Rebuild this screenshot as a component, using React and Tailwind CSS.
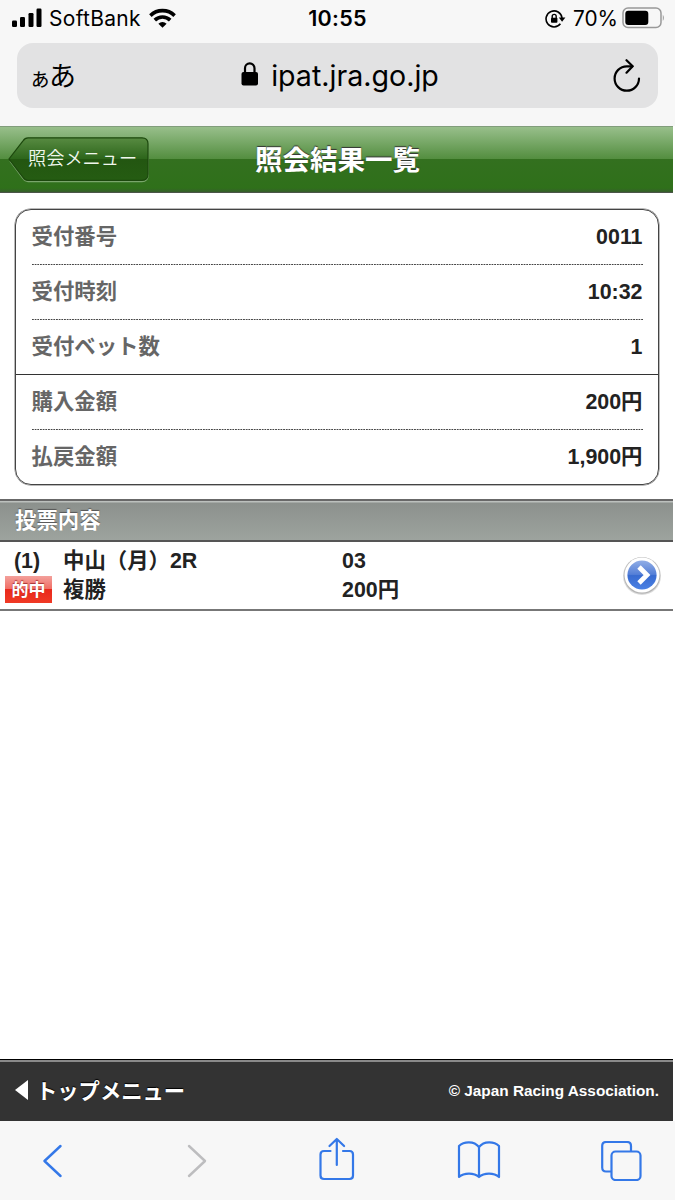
const blue = '#3478e8';

const dots = 'bg-[linear-gradient(90deg,#444_1.4px,transparent_1.4px)] bg-[length:2.68px_1px] bg-repeat-x';

const summary = [
  { label: '受付番号', value: '0011', line: dots },
  { label: '受付時刻', value: '10:32', line: dots },
  { label: '受付ベット数', value: '1', line: 'bg-transparent' },
];

const amounts = [
  { label: '購入金額', value: '200円', line: dots },
  { label: '払戻金額', value: '1,900円', line: 'bg-transparent' },
];

function StatusBar() {
  return (
    <div className="grid h-[43px] grid-cols-3 pb-[6px] text-[21.5px] font-['Inter',sans-serif] text-black">
      <div className="flex items-center pl-3">
        <svg className="-mt-[2px]" width="30" height="20" viewBox="0 0 30 20">
          <rect x="0" y="12.5" width="5" height="6.5" rx="1.2" />
          <rect x="8" y="9" width="5" height="10" rx="1.2" />
          <rect x="16.5" y="5" width="5" height="14" rx="1.2" />
          <rect x="24.5" y="0.5" width="5" height="18.5" rx="1.2" />
        </svg>
        <span className="ml-[7px] w-[92px] whitespace-nowrap text-[21px] tracking-[0.3px]">SoftBank</span>
        <svg className="ml-2 -mt-[2px]" width="27" height="20" viewBox="0 0 27 20">
          <g fill="none" stroke="#000" strokeWidth="3.6">
            <path d="M1.4 7.6a17.3 17.3 0 0 1 24.2 0" />
            <path d="M5.8 12.1a11 11 0 0 1 15.4 0" />
          </g>
          <path d="M9.4 15.7a5.9 5.9 0 0 1 8.2 0l-4.1 4z" />
        </svg>
      </div>
      <div className="flex items-center justify-center font-semibold tracking-[0.3px]">10:55</div>
      <div className="flex items-center justify-end pr-[10px]">
        <svg className="-ml-px mr-px" width="21" height="20" viewBox="0 0 21 20">
          <path d="M15.4 14.8A8 8 0 1 1 17 9" fill="none" stroke="#000" strokeWidth="1.6" />
          <path d="M13.8 8.6h6.6l-3.3 4.2z" />
          <rect x="6" y="8.8" width="6.4" height="5" rx="0.8" />
          <path d="M7.2 9V7.4a2 2 0 0 1 4 0V9" fill="none" stroke="#000" strokeWidth="1.4" />
        </svg>
        <span className="ml-[6px] w-[45px] whitespace-nowrap text-[20.8px]">70%</span>
        <svg className="ml-1 -mt-[2px]" width="43" height="22" viewBox="0 0 43 22">
          <rect x="1" y="1" width="38" height="19.5" rx="5" fill="none" stroke="#999" strokeWidth="1.5" />
          <rect x="3.3" y="3.7" width="23" height="14.2" rx="3" />
          <path d="M40.8 7.5q2.2 3.3 0 6.6z" fill="#999" />
        </svg>
      </div>
    </div>
  );
}

function AddressBar() {
  return (
    <div className="mx-[17px] grid h-[65px] grid-cols-[1fr_auto_1fr] items-center rounded-[16px] bg-[#e2e2e3] text-black">
      <div className="flex items-baseline pb-[2px] pl-[12px] font-['Noto_Sans_CJK_JP',sans-serif] leading-none">
        <span className="text-[22px] tracking-[-2px]">ぁ</span>
        <span className="text-[27px]">あ</span>
      </div>
      <div className="flex items-center pl-[5px]">
        <svg className="-mt-[2px]" width="18" height="24" viewBox="0 0 18 24">
          <rect x="0.5" y="10" width="16.5" height="13.5" rx="2" />
          <path d="M4 11V6.2a4.75 4.75 0 0 1 9.5 0V11" fill="none" stroke="#000" strokeWidth="2.2" />
        </svg>
        <span className="mt-[2px] ml-[12px] whitespace-nowrap font-['Inter',sans-serif] text-[28.6px]">ipat.jra.go.jp</span>
      </div>
      <div className="flex justify-end pr-[17px]">
        <svg width="28" height="34" viewBox="0 0 28 34" fill="none" stroke="#000" strokeWidth="2.2" strokeLinecap="round" strokeLinejoin="round">
          <path d="M26 19.5A12.2 12.2 0 1 1 13.8 7.3h5.5" />
          <path d="M13.5 1.2l6.2 6.1-6.2 6.4" />
        </svg>
      </div>
    </div>
  );
}

function PageHeader() {
  return (
    <header className="grid h-[67px] w-[673px] grid-cols-[1fr_auto_1fr] items-center border-t border-b border-t-[#819d7b] border-b-[#4b5548] bg-[linear-gradient(#98bf8b_0%,#528d3e_50%,#33701f_50%,#2f701a_94%,#365e2b_100%)]">
      <div className="relative ml-2 h-[46px] w-[142px]">
        <svg className="absolute inset-0" width="142" height="46" viewBox="0 0 142 46">
          <defs>
            <linearGradient id="back" x1="0" y1="0" x2="0" y2="1">
              <stop offset="0" stopColor="#588b42" />
              <stop offset="0.5" stopColor="#2c651a" />
              <stop offset="0.5" stopColor="#235611" />
              <stop offset="1" stopColor="#255c12" />
            </linearGradient>
          </defs>
          <path d="M17 1.500h117q6 0 6 6v31q0 6-6 6H20q-3 0-5-3L2 24" fill="none" stroke="#79a56b" strokeWidth="1.3" />
          <path d="M20 0.8h114q6 0 6 6v30.5q0 6-6 6H20q-3 0-5-3L1 22 15 3.800q2-3 5-3z" fill="url(#back)" stroke="#1c480d" strokeWidth="1.2" />
        </svg>
        <span className="relative block whitespace-nowrap pl-[20px] text-[18.2px] leading-[44px] font-[350] text-[#f0f7ed]">照会メニュー</span>
      </div>
      <h1 className="ml-[2px] whitespace-nowrap pt-[2px] text-[27.5px] font-bold leading-none text-white [text-shadow:0_-1px_1px_#333]">照会結果一覧</h1>
      <div />
    </header>
  );
}

function Row({ label, value, line }) {
  return (
    <div className="mx-[15.5px] h-[55px]">
      <div className="flex h-[54px] items-center justify-between pt-[2px]">
        <span className="text-[#666]">{label}</span>
        <span>{value}</span>
      </div>
      <div className={`h-px ${line}`} />
    </div>
  );
}

function Arrow() {
  return (
    <svg width="40" height="42" viewBox="0 0 40 42">
      <defs>
        <linearGradient id="ball" x1="0" y1="0" x2="0" y2="1">
          <stop offset="0" stopColor="#92aee6" />
          <stop offset="0.48" stopColor="#547fd7" />
          <stop offset="0.52" stopColor="#386bd0" />
          <stop offset="1" stopColor="#4b81e4" />
        </linearGradient>
      </defs>
      <circle cx="20" cy="21" r="19" fill="#ddd" />
      <circle cx="20" cy="20.5" r="18.3" fill="#b5b5b5" />
      <circle cx="20" cy="20" r="17.5" fill="#fff" />
      <circle cx="20" cy="20" r="14.6" fill="url(#ball)" />
      <path d="M17 12l8 8-8 8" fill="none" stroke="#fff" strokeWidth="4.8" />
    </svg>
  );
}

function Toolbar() {
  return (
    <nav className="flex h-[79px] shrink-0 items-center bg-[#f7f7f7] pl-[42px]">
      <svg width="20" height="34" viewBox="0 0 20 34" fill="none" stroke={blue} strokeWidth="2.4" strokeLinecap="round" strokeLinejoin="round">
        <path d="M18.5 2L2.5 17l16 15" />
      </svg>
      <svg className="ml-[125px]" width="20" height="34" viewBox="0 0 20 34" fill="none" stroke="#bdbdbf" strokeWidth="2.4" strokeLinecap="round" strokeLinejoin="round">
        <path d="M2 2l16 15L2 32" />
      </svg>
      <svg className="mb-[4px] ml-[112px]" width="36" height="44" viewBox="0 0 36 44" fill="none" stroke={blue} strokeWidth="2.2" strokeLinecap="round" strokeLinejoin="round">
        <path d="M11.5 14H5q-3.5 0-3.5 3.5v21Q1.5 42 5 42h25.5q3.5 0 3.5-3.5v-21Q34 14 30.5 14H24" />
        <path d="M17.8 28V2M10.5 9l7.3-7 7.3 7" />
      </svg>
      <svg className="mb-px ml-[102px]" width="44" height="38" viewBox="0 0 44 38" fill="none" stroke={blue} strokeWidth="2.2" strokeLinejoin="round">
        <path d="M22 6C17-.2 7 .2 2 5v31c5-4.5 15-4.5 20 0 5-4.5 15-4.5 20 0V5C37 .2 27-.2 22 6z" />
        <path d="M22 6v30" />
      </svg>
      <svg className="ml-[100px]" width="41" height="40" viewBox="0 0 41 40" fill="none" stroke={blue} strokeWidth="2.2">
        <path d="M10.5 30.5H5Q1.2 30.5 1.2 26.5V5q0-4 4-4H26q4 0 4 4v5.5" />
        <rect x="10.5" y="10.5" width="29" height="28.5" rx="4" />
      </svg>
    </nav>
  );
}

export default function App() {
  return (
    <div className="flex h-[1200px] w-[675px] flex-col overflow-hidden bg-white font-['Liberation_Sans','Noto_Sans_CJK_JP',sans-serif]">
      <div className="h-[126px] shrink-0 bg-[#f7f7f7]">
        <StatusBar />
        <AddressBar />
      </div>

      <PageHeader />

      <main className="w-[673px] grow text-[21.4px] font-bold text-[#222]">
        <section className="mt-[16px] mr-[14px] ml-[15px] h-[276px] rounded-[16px] border border-[#444] leading-none shadow-[0_0_0_0.5px_#777]">
          <div className="h-[165px] border-b border-[#333]">
            {summary.map((item) => <Row key={item.label} {...item} />)}
          </div>
          {amounts.map((item) => <Row key={item.label} {...item} />)}
        </section>

        <h2 className="mt-[14px] h-[43px] border-t-2 border-b-2 border-t-[#686868] border-b-[#555] bg-[linear-gradient(#bcc0bd_0,#bcc0bd_1px,#8c918d_2px,#9da39e_100%)] pl-[15px] leading-[40px] text-white [text-shadow:0_-1px_1px_#555]">
          投票内容
        </h2>

        <div className="flex h-[69px] items-center border-b-2 border-[#777] leading-[29px]">
          <div className="w-[63px]">
            <div className="pl-[14px]">(1)</div>
            <div className="flex h-[29px] items-center pl-[5px]">
              <span className="-mt-[2px] h-[27px] w-[47px] bg-[linear-gradient(#f3a09b_0%,#f06b62_50%,#e9291c_50%,#f03a25_100%)] text-center text-[17px] leading-[29px] text-white [text-shadow:0_-1px_1px_#a33]">的中</span>
            </div>
          </div>
          <div className="w-[279px]">
            <div>中山（月）2R</div>
            <div>複勝</div>
          </div>
          <div className="grow">
            <div>03</div>
            <div>200円</div>
          </div>
          <div className="pr-[11px]">
            <Arrow />
          </div>
        </div>
      </main>

      <footer className="flex h-[62px] w-[673px] shrink-0 items-center justify-between border-t border-black bg-[linear-gradient(#8a8a8a_0,#8a8a8a_2px,#333_2px)] pr-[14px] pl-[15px] font-bold text-white">
        <div className="flex items-center text-[21.3px] leading-none [text-shadow:0_-1px_1px_#000]">
          <svg width="13" height="20" viewBox="0 0 13 20" fill="#fff">
            <path d="M0 10L13 0v20z" />
          </svg>
          <span className="mt-[4px] ml-[8px]">トップメニュー</span>
        </div>
        <small className="text-[15.35px]">© Japan Racing Association.</small>
      </footer>

      <Toolbar />
    </div>
  );
}
